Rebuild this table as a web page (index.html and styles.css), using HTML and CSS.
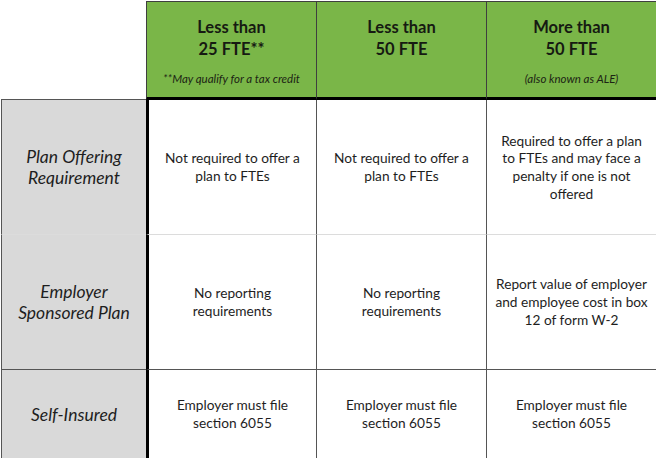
FILE: index.html
```html
<!DOCTYPE html>
<html lang="en">
<head>
<meta charset="utf-8">
<title>Employer requirements by FTE count</title>
<link rel="stylesheet" href="styles.css">
</head>
<body>
<div class="grid">
  <div class="corner"></div>
  <div class="head head-first">
    <div class="title">Less than<br>25 FTE**</div>
    <div class="note">**May qualify for a tax credit</div>
  </div>
  <div class="head">
    <div class="title">Less than<br>50 FTE</div>
  </div>
  <div class="head">
    <div class="title">More than<br>50 FTE</div>
    <div class="note">(also known as ALE)</div>
  </div>

  <div class="label row-a">Plan Offering<br>Requirement</div>
  <div class="cell first row-a">Not required to offer a<br>plan to FTEs</div>
  <div class="cell row-a">Not required to offer a<br>plan to FTEs</div>
  <div class="cell row-a">Required to offer a plan<br>to FTEs and may face a<br>penalty if one is not<br>offered</div>

  <div class="label row-b">Employer<br>Sponsored Plan</div>
  <div class="cell first row-b">No reporting<br>requirements</div>
  <div class="cell row-b">No reporting<br>requirements</div>
  <div class="cell row-b">Report value of employer<br>and employee cost in box<br>12 of form W-2</div>

  <div class="label">Self-Insured</div>
  <div class="cell first">Employer must file<br>section 6055</div>
  <div class="cell">Employer must file<br>section 6055</div>
  <div class="cell">Employer must file<br>section 6055</div>
</div>
</body>
</html>
```

FILE: styles.css
```css
html, body {
  margin: 0;
  padding: 0;
  background: #ffffff;
}

body {
  width: 656px;
  height: 458px;
  overflow: hidden;
  font-family: Lato, "Open Sans", "Liberation Sans", sans-serif;
  color: #1e1e1e;
}

.grid {
  margin: 1px 0 0 1px;
  display: grid;
  grid-template-columns: 145px 170px 170px 170px;
  grid-template-rows: 99px 135px 135px 88px;
}

.grid > div {
  box-sizing: border-box;
}

.corner {
  background: #ffffff;
  border-bottom: 1px solid #555555;
}

.head {
  background: #7ab648;
  border-top: 1px solid #3f3f3f;
  border-left: 1px solid #3f3f3f;
  border-bottom: 3px solid #000000;
  padding-top: 14px;
  text-align: center;
  color: #161a12;
}

.title {
  font-weight: 700;
  font-size: 16.5px;
  line-height: 22px;
}

.note {
  margin-top: 12px;
  font-style: italic;
  font-size: 11.5px;
  line-height: 14px;
  color: #1c2414;
}

.label,
.cell {
  display: flex;
  align-items: center;
  justify-content: center;
  text-align: center;
}

.label {
  background: #d9d9d9;
  border-left: 1px solid #555555;
  font-style: italic;
  font-size: 17.5px;
  line-height: 21px;
}

.cell {
  border-left: 1px solid #555555;
  font-size: 13.7px;
  line-height: 17.7px;
}

.cell.first {
  border-left: 3px solid #000000;
}

.row-a {
  border-bottom: 1px solid #dcdcdc;
}

.row-b {
  border-bottom: 1px solid #555555;
}
```
